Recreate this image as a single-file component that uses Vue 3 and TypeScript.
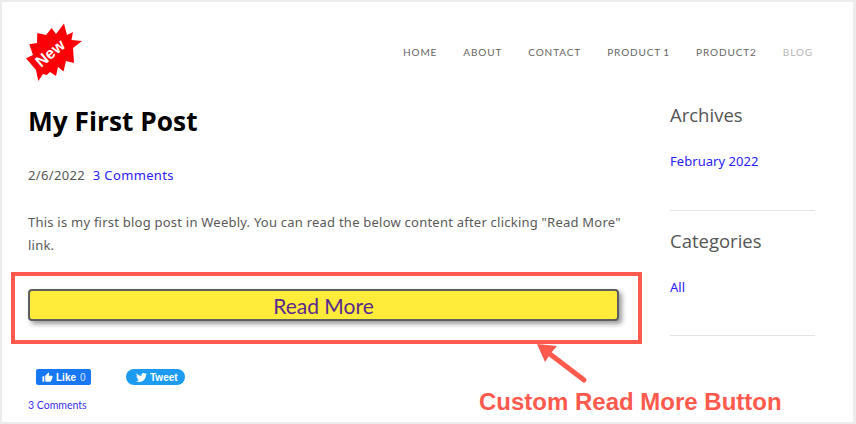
<template>
  <div class="page">
    <header class="header">
      <svg class="logo" viewBox="26 23 57 59" width="57" height="59">
        <polygon
          fill="#fb0007"
          points="64,23.5 67,35 73,32 71.5,40 82,41 73,48 74,63 66,61 63.5,71.5 58,67 56,76 50,72 46.7,75 43,74 38.3,81 36,70 26,58.3 33,55 29.3,44.3 37,43 37.3,33 46,35 51.7,28 56,34"
        />
        <text class="logo-text" x="0" y="0" transform="translate(41 68) rotate(-40)">New</text>
      </svg>
      <nav class="nav">
        <a v-for="item in navItems" :key="item" :class="{ current: item === 'BLOG' }">{{ item }}</a>
      </nav>
    </header>

    <div class="content">
      <main class="post">
        <h1 class="title">My First Post</h1>
        <p class="meta">2/6/2022 <a class="link">3 Comments</a></p>
        <p class="body-text">
          This is my first blog post in Weebly. You can read the below content after clicking "Read More" link.
        </p>
        <div class="highlight">
          <button class="read-more">Read More</button>
        </div>
        <div class="social">
          <span class="like">
            <svg viewBox="0 0 24 24" width="11" height="11"><path fill="#fff" d="M1 21h4V9H1v12zm22-11c0-1.1-.9-2-2-2h-6.31l.95-4.57.03-.32c0-.41-.17-.79-.44-1.06L14.17 1 7.59 7.59C7.22 7.95 7 8.45 7 9v10c0 1.1.9 2 2 2h9c.83 0 1.54-.5 1.84-1.22l3.02-7.05c.09-.23.14-.47.14-.73v-2z" /></svg>
            Like <span class="count">0</span>
          </span>
          <span class="tweet">
            <svg viewBox="0 0 24 24" width="11" height="11"><path fill="#fff" d="M23.953 4.57a10 10 0 01-2.825.775 4.958 4.958 0 002.163-2.723c-.951.555-2.005.959-3.127 1.184a4.92 4.92 0 00-8.384 4.482C7.69 8.095 4.067 6.13 1.64 3.162a4.822 4.822 0 00-.666 2.475c0 1.71.87 3.213 2.188 4.096a4.904 4.904 0 01-2.228-.616v.06a4.923 4.923 0 003.946 4.827 4.996 4.996 0 01-2.212.085 4.936 4.936 0 004.604 3.417 9.867 9.867 0 01-6.102 2.105c-.39 0-.779-.023-1.17-.067a13.995 13.995 0 007.557 2.209c9.053 0 13.998-7.496 13.998-13.985 0-.21 0-.42-.015-.63A9.935 9.935 0 0024 4.59z" /></svg>
            Tweet
          </span>
        </div>
        <a class="comments">3 Comments</a>
      </main>

      <aside class="sidebar">
        <section v-for="group in sideGroups" :key="group.title" class="side-group">
          <h2 class="side-title">{{ group.title }}</h2>
          <a class="link side-link">{{ group.link }}</a>
        </section>
      </aside>
    </div>

    <!-- annotation drawn over the screenshot -->
    <svg class="arrow" viewBox="0 0 60 50" width="60" height="50">
      <path d="M48 40 L10 11" stroke="#ff5a4d" stroke-width="5" stroke-linecap="round" fill="none" />
      <polygon fill="#ff5a4d" points="1,4 21,6 15,13 9,22" />
    </svg>
    <div class="caption">Custom Read More Button</div>
  </div>
</template>

<script setup lang="ts">
const navItems: string[] = ['HOME', 'ABOUT', 'CONTACT', 'PRODUCT 1', 'PRODUCT2', 'BLOG']

const sideGroups = [
  { title: 'Archives', link: 'February 2022' },
  { title: 'Categories', link: 'All' },
]
</script>

<style>
html,
body {
  margin: 0;
  background: #fff;
}
</style>

<style scoped>
.page {
  position: relative;
  box-sizing: border-box;
  width: 856px;
  height: 424px;
  overflow: hidden;
  background: #fff;
  border: 2px solid #ececec;
  border-right-width: 3px;
}

.header {
  display: flex;
  justify-content: space-between;
  align-items: flex-start;
  box-sizing: border-box;
  height: 99px;
  padding: 21px 40px 0 24px;
}

.logo {
  display: block;
}

.logo-text {
  font-family: 'Liberation Sans', sans-serif;
  font-weight: 700;
  font-size: 16px;
  fill: #fff;
}

.nav {
  display: flex;
  gap: 26px;
  margin-top: 22px;
  font-family: Lato, sans-serif;
  font-size: 10px;
  line-height: 14px;
  letter-spacing: 0.9px;
  word-spacing: -1px;
  color: #666;
}

.nav .current {
  color: #b5b5b5;
}

.content {
  display: flex;
  padding-left: 9px;
}

.post {
  width: 631px;
}

.title {
  margin: 1px 0 0 17px;
  font-family: 'Open Sans', sans-serif;
  font-weight: 700;
  font-size: 26.3px;
  line-height: 38px;
  color: #000;
}

.meta {
  margin: 25px 0 0 17px;
  font-family: 'Noto Sans', sans-serif;
  font-size: 13px;
  line-height: 20px;
  letter-spacing: 0.35px;
  color: #555;
}

.link {
  margin-left: 4px;
  color: #2a20f5;
}

.body-text {
  margin: 26px 0 0 17px;
  width: 598px;
  font-family: 'Noto Sans', sans-serif;
  font-size: 13px;
  line-height: 23px;
  letter-spacing: 0.23px;
  color: #5a5a5a;
}

.highlight {
  box-sizing: border-box;
  height: 72px;
  margin-top: 15px;
  padding: 13px 19px 0 13px;
  border: 4px solid #ff5a4d;
}

.read-more {
  display: block;
  box-sizing: border-box;
  width: 100%;
  height: 32px;
  padding: 1px 0 0;
  border: 2px solid #5e5e5e;
  border-radius: 4px;
  background: #ffec3a;
  box-shadow: 3px 3px 5px rgba(0, 0, 0, 0.4);
  font-family: Lato, sans-serif;
  font-size: 21px;
  line-height: 26px;
  color: #5b2a8c;
}

.social {
  display: flex;
  gap: 35px;
  margin: 25px 0 0 25px;
  font-family: 'Liberation Sans', sans-serif;
  font-weight: 700;
  font-size: 10px;
}

.like,
.tweet {
  display: inline-flex;
  align-items: center;
  gap: 3px;
  box-sizing: border-box;
  height: 16px;
  color: #fff;
}

.like {
  width: 55px;
  padding-left: 6px;
  border-radius: 2px;
  background: #1877f2;
}

.count {
  margin-left: 1px;
  font-weight: 400;
  opacity: 0.8;
}

.tweet {
  width: 59px;
  padding-left: 10px;
  border-radius: 8px;
  background: #1d9bf0;
}

.comments {
  display: block;
  margin: 13px 0 0 17px;
  font-family: Lato, sans-serif;
  font-size: 10.5px;
  line-height: 14px;
  color: #3a2ff0;
}

.sidebar {
  width: 145px;
  margin-left: 28px;
}

.side-group {
  box-sizing: border-box;
  height: 110px;
  border-bottom: 1px solid #e4e4e4;
}

.side-group + .side-group {
  height: 125px;
  padding-top: 16px;
}

.side-title {
  margin: 0;
  font-family: 'Open Sans', sans-serif;
  font-weight: 400;
  font-size: 18.5px;
  line-height: 27px;
  color: #555;
}

.side-link {
  display: block;
  margin: 23px 0 0;
  font-family: 'Noto Sans', sans-serif;
  font-size: 13px;
  line-height: 20px;
  letter-spacing: 0.05px;
}

.arrow {
  position: absolute;
  left: 534px;
  top: 338px;
}

.caption {
  position: absolute;
  left: 477px;
  top: 385px;
  font-family: 'Liberation Sans', sans-serif;
  font-weight: 700;
  font-size: 24px;
  line-height: 30px;
  white-space: nowrap;
  color: #ff5a4d;
}
</style>
